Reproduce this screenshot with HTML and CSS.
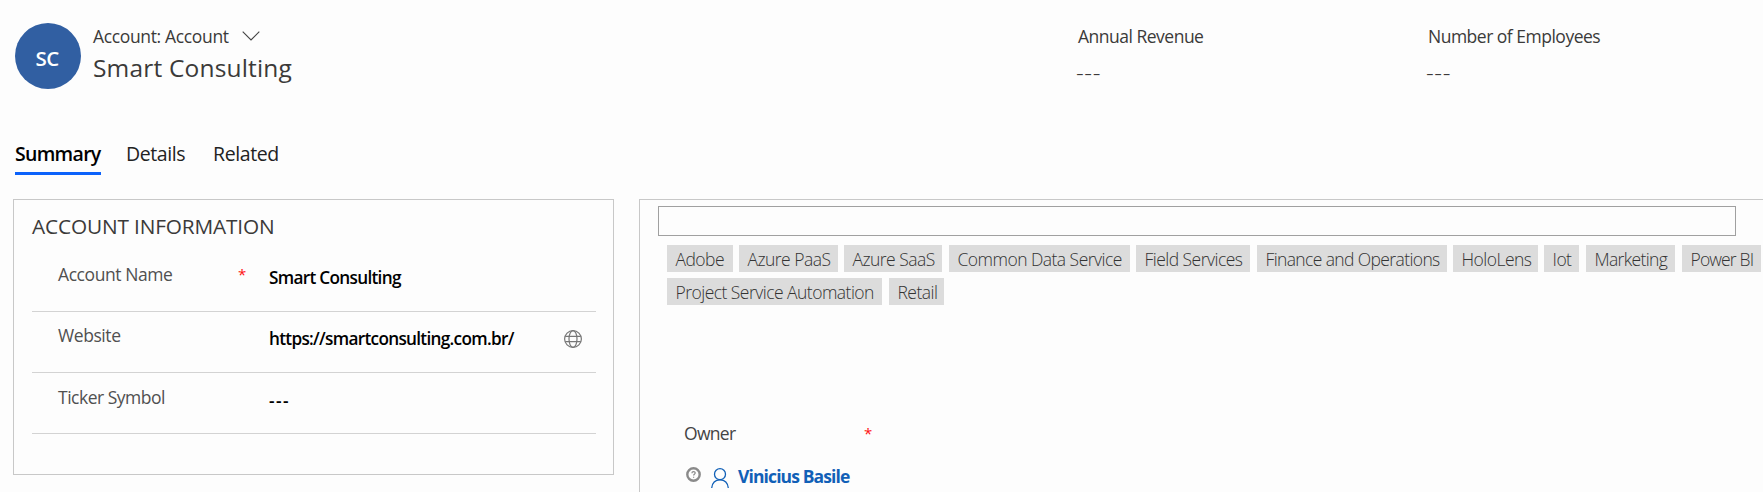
FILE: index.html
```html
<!DOCTYPE html>
<html lang="en">
<head>
<meta charset="utf-8">
<title>Account: Smart Consulting</title>
<link rel="stylesheet" href="styles.css">
</head>
<body>
<header class="record-header">
  <div class="avatar"><span class="initials">SC</span></div>
  <div class="identity">
    <div class="form-picker"><span class="form-name">Account: Account</span>
      <svg class="chevron" viewBox="0 0 18 10"><path d="M.7.7 9 9 17.300.7"/></svg>
    </div>
    <h1 class="record-name">Smart Consulting</h1>
  </div>
  <div class="stat stat-revenue"><div class="stat-label">Annual Revenue</div><div class="stat-value">---</div></div>
  <div class="stat"><div class="stat-label">Number of Employees</div><div class="stat-value">---</div></div>
</header>
<nav class="tabs">
  <a class="tab tab-summary">Summary</a>
  <a class="tab tab-details">Details</a>
  <a class="tab tab-related">Related</a>
</nav>
<main class="columns">
  <section class="card info">
    <h2 class="card-title">ACCOUNT INFORMATION</h2>
    <div class="field"><div class="label">Account Name</div><span class="required">*</span><div class="value">Smart Consulting</div></div>
    <div class="field"><div class="label">Website</div><span class="required"></span><div class="value">https://smartconsulting.com.br/</div>
      <svg class="globe" viewBox="0 0 18 18"><circle cx="9" cy="9" r="8.400"/><ellipse cx="9" cy="9" rx="4" ry="8.400"/><path d="M1.200 6.300h15.600M1.200 11.700h15.600"/></svg>
    </div>
    <div class="field ticker"><div class="label">Ticker Symbol</div><span class="required"></span><div class="value empty">---</div></div>
  </section>
  <section class="card skills">
    <div class="search"></div>
    <div class="tags">
      <span class="tag w1">Adobe</span><span class="tag w2">Azure PaaS</span><span class="tag w3">Azure SaaS</span><span class="tag w4">Common Data Service</span><span class="tag w5">Field Services</span><span class="tag w6">Finance and Operations</span><span class="tag w7">HoloLens</span><span class="tag w8">Iot</span><span class="tag w9">Marketing</span><span class="tag w10">Power BI</span>
    </div>
    <div class="tags">
      <span class="tag w11">Project Service Automation</span><span class="tag w12">Retail</span>
    </div>
    <div class="owner-label"><span class="t-owner">Owner</span><span class="required">*</span></div>
    <div class="owner">
      <svg class="help" viewBox="0 0 15 15"><circle cx="7.500" cy="7.500" r="6.200"/><path d="M5.900 6.300c0-2.400 3.400-2.200 3.300-.2 0 1.200-1.600 1.200-1.600 2.500M7.600 9.700v1"/></svg>
      <svg class="person" viewBox="0 0 18 20"><circle cx="9" cy="6.200" r="5.500"/><path d="M.7 20c.5-5 3.700-8.200 8.300-8.200s7.800 3.200 8.300 8.200"/></svg>
      <a class="owner-name">Vinicius Basile</a>
    </div>
  </section>
</main>
</body>
</html>
```
FILE: styles.css
```css
* { box-sizing: border-box; }
body { margin: 0; width: 1763px; height: 492px; overflow: hidden; background: #fdfdfd; color: #3b3a39; font: 17.5px/24px "Open Sans", "Noto Sans", sans-serif; white-space: nowrap; }
svg { fill: none; display: block; flex: none; }
h1, h2 { margin: 0; font-weight: 400; }

.record-header { display: flex; height: 137px; padding: 23px 0 0 15px; }
.avatar { width: 66px; height: 66px; border-radius: 50%; background: #315fa2; color: #fff; display: flex; align-items: center; justify-content: center; padding: 3px 2px 0 0; font-size: 20.5px; font-weight: 600; letter-spacing: -.7px; }
.identity { flex: none; width: 997px; padding: 1px 0 0 12px; }
.form-picker { display: flex; align-items: flex-start; height: 27px; gap: 13px; }
.form-name { letter-spacing: -.35px; width: 136px; }
.chevron { width: 18px; height: 10px; margin-top: 7px; stroke: #444; stroke-width: 1.100; }
.record-name { font-size: 24.500px; line-height: 34px; letter-spacing: .18px; }
.stat { padding-top: 1px; }
.stat-revenue { width: 350px; }
.stat-label { letter-spacing: -.5px; }
.stat-value { margin: 14px 0 0 -2px; font-size: 24px; line-height: 20px; font-weight: 300; letter-spacing: .6px; }

.tabs { display: flex; height: 62px; padding-left: 15px; color: #222; font-size: 19.500px; line-height: 33px; }
.tab { height: 38px; }
.tab-summary { width: 86px; margin-right: 25px; border-bottom: 3px solid #0b62fb; color: #000; font-weight: 600; letter-spacing: -.7px; }
.tab-details { width: 87px; letter-spacing: -.4px; }
.tab-related { letter-spacing: -.4px; }

.columns { display: flex; gap: 25px; padding-left: 13px; }
.card { border: 1px solid #c8c8c8; }
.info { flex: none; width: 601px; height: 276px; padding: 11px 17px 0 18px; }
.card-title { height: 40px; font-size: 20.800px; line-height: 30px; letter-spacing: -.15px; }
.field { display: flex; height: 61px; padding: 11px 0 0 26px; border-bottom: 1px solid #d3d3d3; color: #505050; }
.label { width: 180px; letter-spacing: -.42px; }
.ticker .label { padding-top: 1px; letter-spacing: -.5px; }
.required { width: 31px; color: #f11; font-size: 15px; }
.value { width: 295px; padding-top: 4px; color: #000; font-size: 17.200px; font-weight: 600; letter-spacing: -.7px; }
.empty { padding-top: 5px; letter-spacing: 1.500px; }
.globe { width: 18px; height: 18px; margin-top: 7px; stroke: #777; stroke-width: 1.200; }

.skills { flex: none; width: 1130px; height: 310px; padding-top: 6px; }
.search { width: 1078px; height: 30px; margin: 0 0 9px 18px; border: 1px solid #a0a0a0; }
.tags { display: flex; height: 33px; padding-left: 27px; color: #333; font-weight: 300; }
.tag { height: 27px; padding-left: 8.500px; line-height: 29px; background: #dcdcdc; margin-right: 6px; letter-spacing: -.53px; flex: none; }
.w1 { width: 66px; }
.w2 { width: 99px; }
.w3 { width: 98px; margin-right: 7px; }
.w4 { width: 181px; }
.w5 { width: 114px; margin-right: 7px; }
.w6 { width: 190px; letter-spacing: -.62px; }
.w7 { width: 85px; }
.w8 { width: 35px; margin-right: 7px; }
.w9 { width: 89px; margin-right: 7px; letter-spacing: -.65px; }
.w10 { width: 79px; letter-spacing: -.85px; }
.w11 { width: 215px; margin-right: 7px; }
.w12 { width: 55px; }
.owner-label { display: flex; padding: 110px 0 0 44px; color: #444; }
.t-owner { width: 180px; letter-spacing: -.7px; }
.owner { display: flex; padding: 18px 0 0 46px; }
.help { width: 15px; height: 15px; margin: 4px 10px 0 0; stroke: #8a8a8a; stroke-width: 2.400; }
.help path { stroke-width: 1.200; }
.person { width: 18px; height: 20px; margin-right: 9px; margin-top: 5px; stroke: #1160b7; stroke-width: 1.300; }
.owner-name { padding-top: 1px; color: #1160b7; font-weight: 700; letter-spacing: -.88px; }
```
